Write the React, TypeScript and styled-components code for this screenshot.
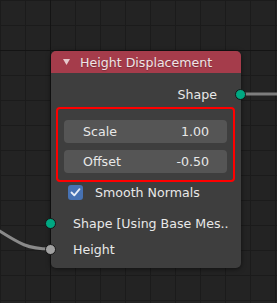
import React from 'react';
import styled, { createGlobalStyle } from 'styled-components';

const GlobalStyle = createGlobalStyle`
    html, body {
        margin: 0;
        padding: 0;
        background: #232323;
    }
`;

const Canvas = styled.div`
    position: relative;
    width: 277px;
    height: 303px;
    overflow: hidden;
    background-color: #232323;
    background-image:
        linear-gradient(to right, transparent 50px, #141414 50px, #141414 51px, transparent 51px),
        linear-gradient(to bottom, transparent 50px, #141414 50px, #141414 51px, transparent 51px),
        linear-gradient(to right, #1b1b1b 1px, transparent 1px),
        linear-gradient(to bottom, #1b1b1b 1px, transparent 1px);
    background-size: 277px 303px, 277px 303px, 25px 25px, 25px 25px;
    background-repeat: no-repeat, no-repeat, repeat, repeat;
    font-family: 'DejaVu Sans', 'Liberation Sans', sans-serif;
    font-size: 12.6px;
    color: #e8e8e8;
`;

const Links = styled.svg`
    position: absolute;
    left: 0;
    top: 0;
`;

const Node = styled.div`
    position: absolute;
    left: 51px;
    top: 51px;
    width: 190px;
    border-radius: 5px;
    background: #3e3e3e;
    box-shadow: 0 1px 5px rgba(0, 0, 0, 0.55);
`;

const Header = styled.div`
    display: flex;
    align-items: center;
    gap: 10px;
    height: 22px;
    padding-left: 12px;
    border-radius: 5px 5px 0 0;
    background: #a53c4b;
    color: #efe4e5;
    text-shadow: 0 1px 1px rgba(0, 0, 0, 0.25);
`;

const Body = styled.div`
    padding: 8px 0 6px;
`;

const SocketRow = styled.div<{ $output?: boolean }>`
    position: relative;
    display: flex;
    align-items: center;
    justify-content: ${p => (p.$output ? 'flex-end' : 'flex-start')};
    height: 26px;
    padding: ${p => (p.$output ? '0 24px 0 0' : '0 0 0 22px')};
    white-space: nowrap;
`;

const Socket = styled.span<{ $color: string; $output?: boolean }>`
    position: absolute;
    top: 50%;
    ${p => (p.$output ? 'right: -5px;' : 'left: -6px;')}
    width: 11px;
    height: 11px;
    margin-top: -5.5px;
    box-sizing: border-box;
    border-radius: 50%;
    background: ${p => p.$color};
    border: 1px solid #161616;
`;

const Highlight = styled.div`
    display: flex;
    flex-direction: column;
    gap: 7px;
    width: 179px;
    box-sizing: border-box;
    margin-left: 5px;
    padding: 11px 6px 7px;
    border: 2px solid #ff0000;
    border-radius: 4px;
`;

const Field = styled.div`
    display: flex;
    align-items: center;
    justify-content: space-between;
    height: 23px;
    padding: 0 18px 0 19px;
    border-radius: 4px;
    background: #555555;
    color: #e8e8e8;
`;

const CheckRow = styled.div`
    display: flex;
    align-items: center;
    gap: 12px;
    height: 15px;
    margin: 3px 0 10px;
    padding-left: 17px;
`;

const CheckBox = styled.span`
    display: flex;
    align-items: center;
    justify-content: center;
    width: 15px;
    height: 15px;
    border-radius: 3px;
    background: #4772b3;
`;

const App = () => (
    <Canvas>
        <GlobalStyle />
        <Links width={277} height={303}>
            <line x1={241} y1={94} x2={277} y2={94} stroke="#7e7e7e" strokeWidth={3} />
            <path d="M -2 230 C 20 244, 28 249, 50 249" fill="none" stroke="#8a8a8a" strokeWidth={3} />
        </Links>
        <Node>
            <Header>
                <svg width={7} height={6} viewBox="0 0 7 6">
                    <polygon points="0,0 7,0 3.5,6" fill="#e6c9cc" />
                </svg>
                Height Displacement
            </Header>
            <Body>
                <SocketRow $output>
                    Shape
                    <Socket $output $color="#00a882" />
                </SocketRow>
                <Highlight>
                    <Field>
                        <span>Scale</span>
                        <span>1.00</span>
                    </Field>
                    <Field>
                        <span>Offset</span>
                        <span>-0.50</span>
                    </Field>
                </Highlight>
                <CheckRow>
                    <CheckBox>
                        <svg width={11} height={11} viewBox="0 0 11 11">
                            <polyline points="1.5,5.5 4.3,8.3 9.5,2.2" fill="none" stroke="#e8eef8" strokeWidth={1.8} strokeLinecap="round" strokeLinejoin="round" />
                        </svg>
                    </CheckBox>
                    Smooth Normals
                </CheckRow>
                <SocketRow>
                    <Socket $color="#00a882" />
                    Shape [Using Base Mes..
                </SocketRow>
                <SocketRow>
                    <Socket $color="#a1a1a1" />
                    Height
                </SocketRow>
            </Body>
        </Node>
    </Canvas>
);

export default App;
